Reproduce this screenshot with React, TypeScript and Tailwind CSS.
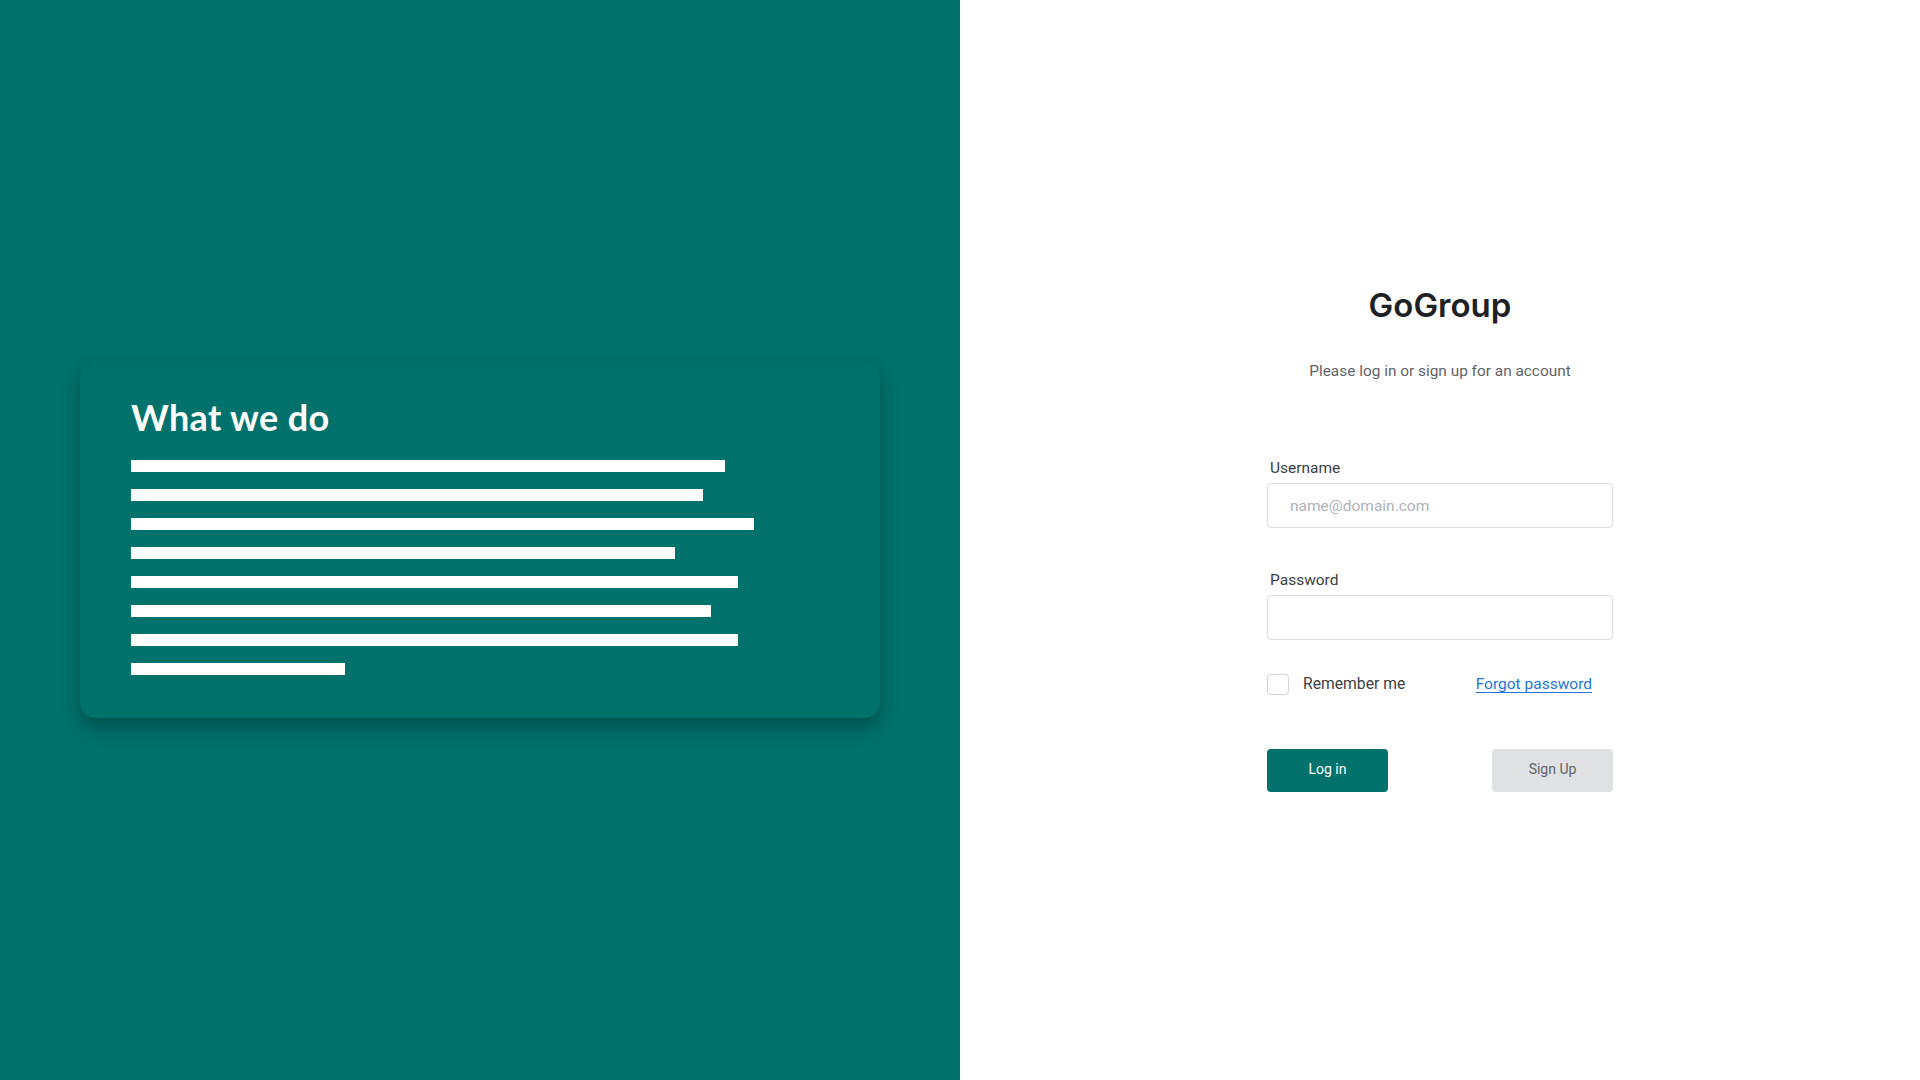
import React from "react";

const bars = [594, 572, 623, 544, 607, 580, 607, 214];

export default function App() {
  return (
    <div className="flex h-[1080px] w-[1920px] overflow-hidden">
      <div className="flex w-[960px] shrink-0 items-center bg-[#00716b]">
        <div className="ml-[80px] w-[800px] rounded-[16px] bg-[#00716b] pl-[51px] pt-[34px] pb-[43px] shadow-[0_10px_18px_rgba(0,0,0,0.28)]">
          <h2
            className="text-[36px] leading-[43px] font-bold tracking-[0.01em] text-white"
            style={{ fontFamily: "Lato, 'Open Sans', sans-serif" }}
          >
            What we do
          </h2>
          <div className="mt-[21px] flex flex-col gap-[17px]">
            {bars.map((w, i) => (
              <div key={i} className="h-[12px] bg-white" style={{ width: w }} />
            ))}
          </div>
        </div>
      </div>

      <div
        className="flex flex-1 flex-col items-center bg-white pt-[285px]"
        style={{ fontFamily: "Roboto, 'Liberation Sans', sans-serif" }}
      >
        <h1
          className="text-[33px] leading-[40px] font-semibold text-[#202124]"
          style={{ fontFamily: "Inter, Roboto, sans-serif" }}
        >
          GoGroup
        </h1>
        <p className="mt-[34px] text-[15.4px] leading-[24px] text-[#5f6368]">
          Please log in or sign up for an account
        </p>

        <div className="mt-[75px] flex w-[346px] flex-col">
          <label className="pl-[3px] text-[15.5px] leading-[20px] text-[#3c4043]">Username</label>
          <input
            type="text"
            placeholder="name@domain.com"
            className="mt-[5px] h-[45px] w-full rounded-[4px] border border-[#dadce0] bg-white pl-[22px] text-[15.5px] text-[#3c4043] outline-none placeholder:text-[#b0b3b8]"
          />

          <label className="mt-[42px] pl-[3px] text-[15.5px] leading-[20px] text-[#3c4043]">Password</label>
          <input
            type="password"
            className="mt-[5px] h-[45px] w-full rounded-[4px] border border-[#dadce0] bg-white pl-[22px] text-[15.5px] outline-none"
          />

          <div className="mt-[32px] flex h-[24px] items-center pr-[21px]">
            <div className="h-[21px] w-[22px] rounded-[4px] border border-[#d0d3d7] bg-white" />
            <span className="ml-[14px] text-[15.7px] leading-[24px] text-[#3c4043]">Remember me</span>
            <a
              href="#"
              className="ml-auto text-[15.5px] leading-[24px] text-[#1f76d2] underline underline-offset-[3px]"
            >
              Forgot password
            </a>
          </div>

          <div className="mt-[53px] flex justify-between">
            <button className="h-[43px] w-[121px] rounded-[4px] bg-[#00716b] pb-[2px] text-[14px] text-white">
              Log in
            </button>
            <button className="h-[43px] w-[121px] rounded-[4px] bg-[#e0e1e3] pb-[2px] text-[14px] text-[#5f6368]">
              Sign Up
            </button>
          </div>
        </div>
      </div>
    </div>
  );
}
